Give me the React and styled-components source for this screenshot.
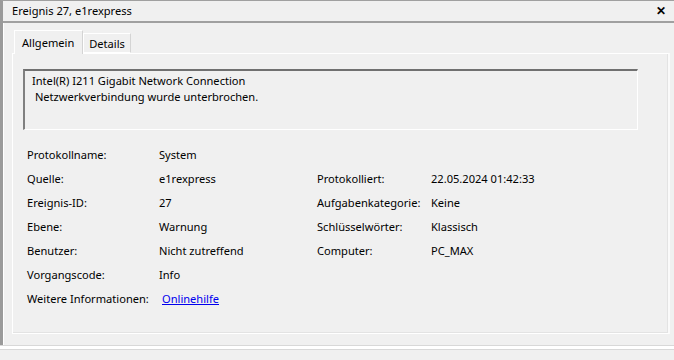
import React from 'react'
import styled, { createGlobalStyle } from 'styled-components'

const GlobalStyle = createGlobalStyle`
    html, body {
        margin: 0;
        padding: 0;
        background: #f0f0f0;
    }
    body {
        font-family: "Noto Sans", "Open Sans", sans-serif;
        font-size: 11.1px;
        color: #000;
    }
`

const leftRows = [
    ['Protokollname:', 'System'],
    ['Quelle:', 'e1rexpress'],
    ['Ereignis-ID:', '27'],
    ['Ebene:', 'Warnung'],
    ['Benutzer:', 'Nicht zutreffend'],
    ['Vorgangscode:', 'Info'],
]

const rightRows = [
    null,
    ['Protokolliert:', '22.05.2024 01:42:33'],
    ['Aufgabenkategorie:', 'Keine'],
    ['Schlüsselwörter:', 'Klassisch'],
    ['Computer:', 'PC_MAX'],
    null,
]

function App() {
    return (
        <>
            <GlobalStyle />
            <Page>
                <Window>
                    <TitleBar>
                        <span>Ereignis 27, e1rexpress</span>
                        <CloseButton>✕</CloseButton>
                    </TitleBar>
                    <Body>
                        <Tabs>
                            <Tab active>Allgemein</Tab>
                            <Tab>Details</Tab>
                        </Tabs>
                        <Panel>
                            <MessageBox>
                                <div>Intel(R) I211 Gigabit Network Connection</div>
                                <div>&nbsp;Netzwerkverbindung wurde unterbrochen.</div>
                            </MessageBox>
                            <Fields>
                                {leftRows.map((row, i) => (
                                    <React.Fragment key={i}>
                                        <Cell>{row[0]}</Cell>
                                        <Cell>{row[1]}</Cell>
                                        <Cell>{rightRows[i] ? rightRows[i][0] : ''}</Cell>
                                        <Cell>{rightRows[i] ? rightRows[i][1] : ''}</Cell>
                                    </React.Fragment>
                                ))}
                                <Cell>Weitere Informationen:</Cell>
                                <Cell><HelpLink href="#">Onlinehilfe</HelpLink></Cell>
                            </Fields>
                        </Panel>
                    </Body>
                </Window>
                <Separator />
            </Page>
        </>
    )
}

const Page = styled.div`
    width: 674px;
    height: 360px;
    overflow: hidden;
    display: flex;
    flex-direction: column;
`

const Window = styled.div`
    height: 345px;
    box-sizing: border-box;
    border-top: 1px solid #a0a0a0;
    border-left: 3px solid #9a9a9a;
    box-shadow: inset 1px 0 0 #ffffff;
    display: flex;
    flex-direction: column;
`

const TitleBar = styled.div`
    height: 22px;
    box-sizing: border-box;
    border-bottom: 2px solid #a0a0a0;
    display: flex;
    align-items: center;
    justify-content: space-between;
    padding: 0 8px 0 9px;
    background: #f0f0f0;
    span {
        line-height: 20px;
    }
`

const CloseButton = styled.div`
    font-weight: 900;
    font-size: 12px;
    line-height: 20px;
`

const Body = styled.div`
    flex: 1;
    display: flex;
    flex-direction: column;
    padding: 7px 4px 11px 9px;
`

const Tabs = styled.div`
    display: flex;
    align-items: flex-end;
    height: 23px;
    padding-left: 2px;
    position: relative;
    z-index: 1;
`

const Tab = styled.div`
    box-sizing: border-box;
    height: ${p => (p.active ? '24px' : '20px')};
    margin-bottom: ${p => (p.active ? '-1px' : '0')};
    padding: ${p => (p.active ? '3px 8px 0 7px' : '1px 5px 0 5px')};
    background: #f0f0f0;
    border: 1px solid #ffffff;
    border-right-color: #d4d4d4;
    border-bottom: ${p => (p.active ? 'none' : '1px solid #ffffff')};
    line-height: 17px;
`

const Panel = styled.div`
    flex: 1;
    box-sizing: border-box;
    border: 1px solid #ffffff;
    border-right: 2px solid #fafafa;
    box-shadow: inset -1px -1px 0 #e3e3e3;
    padding: 15px 0 0 14px;
`

const MessageBox = styled.div`
    width: 615px;
    height: 61px;
    box-sizing: border-box;
    border-top: 2px solid #707070;
    border-left: 2px solid #808080;
    border-right: 1px solid #ffffff;
    border-bottom: 1px solid #ffffff;
    padding: 2px 0 0 7px;
    margin-left: -4px;
    line-height: 15.5px;
`

const Fields = styled.div`
    display: grid;
    grid-template-columns: 132px 158px 114px auto;
    grid-auto-rows: 24px;
    margin-top: 13px;
`

const Cell = styled.div`
    line-height: 24px;
    white-space: nowrap;
`

const HelpLink = styled.a`
    color: #0000ee;
    text-decoration: underline;
    margin-left: 3px;
`

const Separator = styled.div`
    height: 3px;
    border-top: 1px solid #d8d8d8;
    border-bottom: 1px solid #d8d8d8;
    background: #ffffff;
`

export default App
